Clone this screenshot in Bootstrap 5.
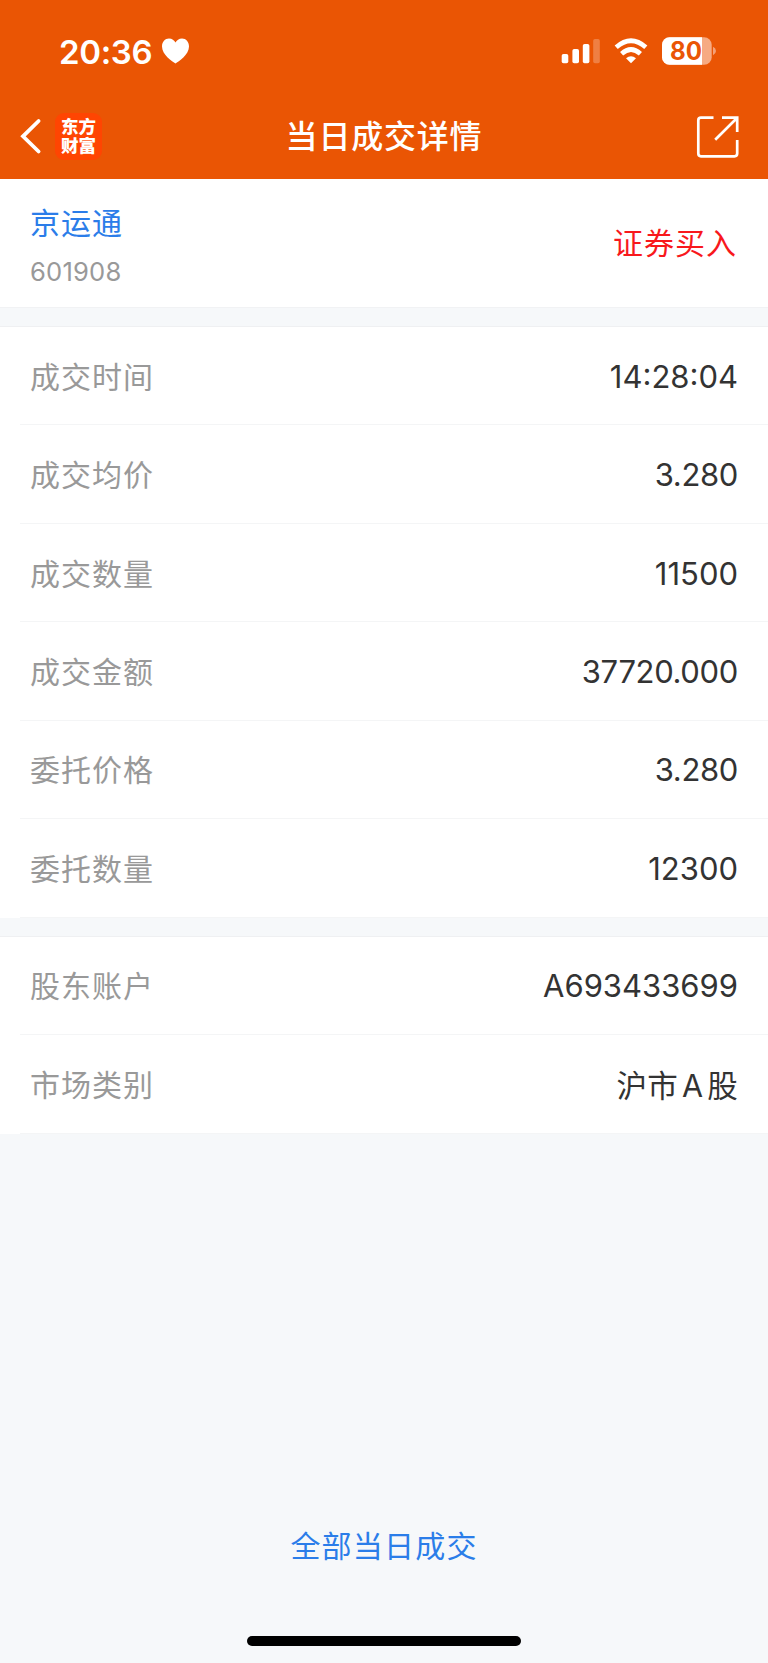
<!DOCTYPE html>
<html lang="zh-CN">
<head>
<meta charset="utf-8">
<meta name="viewport" content="width=device-width, initial-scale=1">
<title>当日成交详情</title>
<link href="https://cdn.jsdelivr.net/npm/bootstrap@5.3.0/dist/css/bootstrap.min.css" rel="stylesheet">
<style>
  body { font-family: Inter, "Noto Sans CJK SC", sans-serif; background: #f6f8fa; color: #333; font-size: 30px; line-height: 44px; }
  .app { height: 1663px; overflow: hidden; }
  .topbar { background: #ea5504; height: 179px; }
  .statusbar { height: 102px; padding: 0 52px 0 59px; }
  .clock { font-size: 33px; font-weight: 600; letter-spacing: -.35px; padding-top: 1px; }
  .titlebar { height: 68px; padding: 0 28px 0 20px; }
  .brand { width: 47px; height: 47px; border-radius: 9px; background: #ff4502; font-size: 17.5px; line-height: 19.5px; font-weight: 900; }
  .page-title { font-size: 32px; font-weight: 500; letter-spacing: .8px; padding-top: 2px; }
  .battery-text { font: 700 25px Inter, sans-serif; }
  .stock { height: 129px; padding: 2px 32px 0 30px; border-bottom: 1px solid #f1f2f4; }
  .cjk { letter-spacing: 1px; }
  .link-blue { color: #2b7de9; }
  .buy { color: #f8181c; margin-right: -1px; padding-bottom: 2px; }
  .code { font-size: 25.6px; letter-spacing: .2px; line-height: 34px; padding-top: 2px; }
  .names { padding-top: 2px; }
  .muted { color: #999; }
  .rows { margin-top: 18px; border-top: 1px solid #eff0f2; }
  .item { height: 98.45px; padding: 2px 30px 0 10px; margin-left: 20px; border-bottom: 1px solid #f4f5f6; }
  .value { font-size: 31px; letter-spacing: -.35px; }
  .value.tight { letter-spacing: 0; }
  .value.market { font-size: 30.5px; letter-spacing: .3px; word-spacing: -5px; padding-top: 2px; }
  .home-bar { width: 274px; height: 10px; border-radius: 5px; background: #000; }
  .footer { padding-bottom: 17px; }
  .all-link { margin-bottom: 68px; letter-spacing: 1.2px; }
</style>
</head>
<body>
<div class="app d-flex flex-column">
  <header class="topbar text-white flex-shrink-0">
    <div class="statusbar d-flex align-items-center justify-content-between">
      <div class="d-flex align-items-center">
        <span class="clock">20:36</span>
        <svg class="ms-2" width="30" height="28" viewBox="0 0 30 28"><path fill="#fff" d="M15.500 26.500C12.500 24.500 2 18 2 9.500C2 5 5 1.500 9 1.500C12 1.500 14.300 3.200 15.500 5.500C16.700 3.200 19 1.500 22 1.500C26 1.500 29 5 29 9.500C29 18 18.500 24.500 15.500 26.500Z"/></svg>
      </div>
      <svg width="156" height="30" viewBox="560 36 156 30">
        <g fill="#fff"><rect x="561.7" y="54" width="6.600" height="9.200" rx="1.800"/><rect x="572.4" y="49" width="6.600" height="14.200" rx="1.800"/><rect x="582.800" y="44" width="6.600" height="19.200" rx="1.800"/><rect x="593.200" y="39" width="6.600" height="24.200" rx="1.800" opacity=".25"/>
        <path d="M631 63.200l-5-4.900q5-4.300 10 0z"/></g>
        <g fill="none" stroke="#fff" stroke-width="4.700"><path d="M616.200 47.300Q631 34.300 645.800 47.300"/><path d="M621.600 53.700Q631 45.300 640.400 53.700"/></g>
        <clipPath id="bat"><rect x="662" y="37.300" width="49.700" height="27.400" rx="7.500"/></clipPath>
        <g clip-path="url(#bat)"><path fill="#f6aa82" d="M662 37h50v28h-50z"/><path fill="#fff" d="M662 37h40v28h-40z"/></g>
        <path fill="#f4a077" d="M713 46.700q3 1.500 3 4.300t-3 4.300z"/>
        <text class="battery-text" x="670" y="60.200" textLength="32" lengthAdjust="spacingAndGlyphs" fill="#ea5504">80</text>
      </svg>
    </div>
    <div class="titlebar d-flex align-items-center justify-content-between position-relative">
      <div class="d-flex align-items-center">
        <svg width="35" height="40" viewBox="20 116 35 40"><path fill="none" stroke="#fff" stroke-width="3.800" stroke-linecap="round" d="M38.600 121L23 136.300L38.600 151.500"/></svg>
        <div class="brand d-flex flex-column justify-content-center text-center"><span>东方</span><span>财富</span></div>
      </div>
      <div class="page-title position-absolute start-50 translate-middle-x">当日成交详情</div>
      <svg width="44" height="44" viewBox="696 114 44 44"><path fill="none" stroke="#fff" stroke-width="2.700" d="M713.500 117.700H701Q698.300 117.700 698.300 120.400V153.600Q698.300 156.300 701 156.300H734.500Q737.200 156.300 737.200 153.600V140M722 117.700H737.200V132M737 118L715.200 139.700"/></svg>
    </div>
  </header>

  <main>
    <section class="stock bg-white d-flex align-items-center justify-content-between">
      <div class="names d-flex flex-column gap-2">
        <span class="cjk link-blue">京运通</span>
        <span class="code muted">601908</span>
      </div>
      <span class="cjk buy">证券买入</span>
    </section>
    <section class="rows bg-white">
      <div class="item d-flex align-items-center justify-content-between"><span class="cjk muted">成交时间</span><span class="value tight">14:28:04</span></div>
      <div class="item d-flex align-items-center justify-content-between"><span class="cjk muted">成交均价</span><span class="value">3.280</span></div>
      <div class="item d-flex align-items-center justify-content-between"><span class="cjk muted">成交数量</span><span class="value tight">11500</span></div>
      <div class="item d-flex align-items-center justify-content-between"><span class="cjk muted">成交金额</span><span class="value">37720.000</span></div>
      <div class="item d-flex align-items-center justify-content-between"><span class="cjk muted">委托价格</span><span class="value">3.280</span></div>
      <div class="item d-flex align-items-center justify-content-between"><span class="cjk muted">委托数量</span><span class="value tight">12300</span></div>
    </section>
    <section class="rows bg-white">
      <div class="item d-flex align-items-center justify-content-between"><span class="cjk muted">股东账户</span><span class="value tight">A693433699</span></div>
      <div class="item d-flex align-items-center justify-content-between"><span class="cjk muted">市场类别</span><span class="value market">沪市 A 股</span></div>
    </section>
  </main>

  <footer class="footer mt-auto d-flex flex-column align-items-center">
    <a href="#" class="all-link link-blue text-decoration-none">全部当日成交</a>
    <div class="home-bar"></div>
  </footer>
</div>
<script src="https://cdn.jsdelivr.net/npm/bootstrap@5.3.0/dist/js/bootstrap.bundle.min.js"></script>
</body>
</html>
